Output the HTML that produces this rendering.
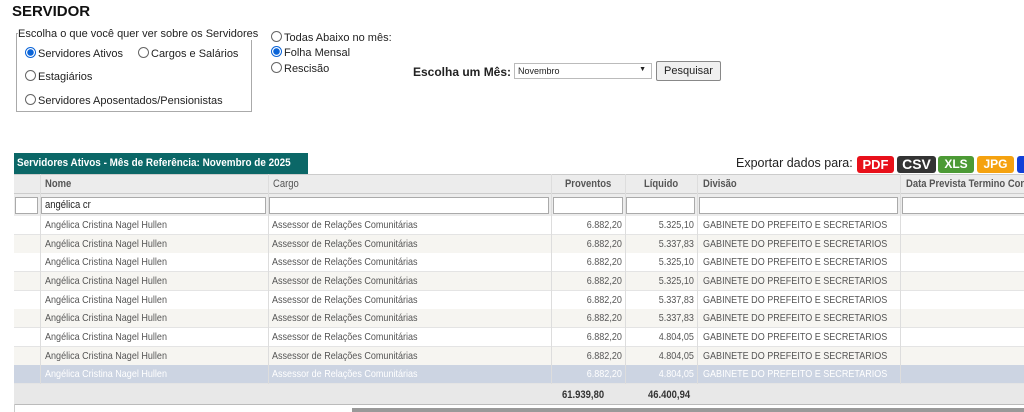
<!DOCTYPE html>
<html><head><meta charset="utf-8"><style>
*{margin:0;padding:0;box-sizing:border-box}
body{width:1024px;height:412px;overflow:hidden;background:#fff;font-family:"Liberation Sans",sans-serif;color:#222;position:relative}
.a{position:absolute;white-space:nowrap}
.r{width:11px;height:11px;border:1px solid #666;border-radius:50%;display:inline-block;vertical-align:-1px;margin-right:2px;background:#fff}
.r.on{border-color:#0a64d8;background:radial-gradient(circle,#0a64d8 0 3px,#fff 3.5px)}
.f{font-size:11px}
.n{display:inline-block;transform:scaleX(.86);transform-origin:left center}
.nr{display:inline-block;transform:scaleX(.86);transform-origin:right center}
.row{position:absolute;left:14px;width:1010px;height:19px;font-size:10.5px;color:#555;border-bottom:1px solid #e4e4e4}
.row div{position:absolute;top:3px;white-space:nowrap}
.vl{position:absolute;top:174px;width:1px;height:210px;background:#ddd}
.inp{position:absolute;top:197px;height:17px;border:1px solid #aaa;background:#fff;font-size:11px;padding-left:3px;line-height:15px}
.btn{position:absolute;top:156px;height:17px;border-radius:3px;color:#fff;font-weight:bold;text-align:center;font-size:12px;line-height:17px}
.h{font-size:11px;color:#555;font-weight:bold}
</style></head><body>
<div class="a" style="left:12px;top:3px;font-size:15px;font-weight:bold;color:#111">SERVIDOR</div>
<div class="a" style="left:16px;top:33px;width:236px;height:79px;border:1px solid #aaa"></div>
<div class="a f" style="left:18px;top:28px;background:#fff">Escolha o que você quer ver sobre os Servidores</div>
<div class="a f" style="left:25px;top:47px"><span class="r on"></span>Servidores Ativos</div>
<div class="a f" style="left:138px;top:47px"><span class="r"></span>Cargos e Salários</div>
<div class="a f" style="left:25px;top:70px"><span class="r"></span>Estagiários</div>
<div class="a f" style="left:25px;top:94px"><span class="r"></span>Servidores Aposentados/Pensionistas</div>
<div class="a f" style="left:271px;top:31px"><span class="r"></span>Todas Abaixo no mês:</div>
<div class="a f" style="left:271px;top:46px"><span class="r on"></span>Folha Mensal</div>
<div class="a f" style="left:271px;top:62px"><span class="r"></span>Rescisão</div>
<div class="a" style="left:413px;top:65px;font-size:12px;font-weight:bold">Escolha um Mês:</div>
<div class="a" style="left:514px;top:63px;width:138px;height:16px;border:1px solid #bbb;font-size:9px;padding:2px 3px">Novembro<span style="position:absolute;right:5px;top:2px;font-size:7px">▼</span></div>
<div class="a" style="left:656px;top:61px;width:65px;height:20px;border:1px solid #888;border-radius:2px;background:#f0f0f0;font-size:11px;text-align:center;line-height:18px">Pesquisar</div>
<div class="a" style="left:14px;top:153px;width:294px;height:21px;background:#0b6767;color:#fff;font-weight:bold;font-size:11px;padding:4px 3px"><span class="n" style="transform:scaleX(.9)">Servidores Ativos - Mês de Referência: Novembro de 2025</span></div>
<div class="a" style="left:736px;top:156px;font-size:12.5px;color:#222">Exportar dados para:</div>
<div class="btn" style="left:857px;width:37px;background:#e8101a;font-size:13px">PDF</div>
<div class="btn" style="left:897px;width:39px;background:#333;font-size:14px">CSV</div>
<div class="btn" style="left:938px;width:36px;background:#4c9a35">XLS</div>
<div class="btn" style="left:977px;width:37px;background:#f5a20f">JPG</div>
<div class="btn" style="left:1017px;width:20px;background:#1140d8"></div>
<div class="a" style="left:14px;top:174px;width:1010px;height:20px;background:#ececec;border-top:1px solid #ccc;border-bottom:1px solid #ccc"></div>
<div class="a" style="left:14px;top:194px;width:1010px;height:22px;background:#ececec"></div>
<div class="a h" style="left:45px;top:178px"><span class="n">Nome</span></div>
<div class="a h" style="left:273px;top:178px;font-weight:normal"><span class="n">Cargo</span></div>
<div class="a h" style="left:565px;top:178px"><span class="n">Proventos</span></div>
<div class="a h" style="left:644px;top:178px"><span class="n">Líquido</span></div>
<div class="a h" style="left:703px;top:178px"><span class="n">Divisão</span></div>
<div class="a h" style="left:906px;top:178px"><span class="n">Data Prevista Termino Con</span></div>
<div class="inp" style="left:15px;width:23px"></div>
<div class="inp" style="left:41px;width:225px"><span class="n">angélica cr</span></div>
<div class="inp" style="left:269px;width:280px"></div>
<div class="inp" style="left:553px;width:70px"></div>
<div class="inp" style="left:626px;width:69px"></div>
<div class="inp" style="left:699px;width:199px"></div>
<div class="inp" style="left:902px;width:130px"></div>
<div id="rows"></div>
<div class="a" style="left:14px;top:384px;width:1010px;height:21px;background:#e8e8e8;border-bottom:1px solid #bbb"></div>
<div class="a" style="left:562px;top:389px;font-size:11px;font-weight:bold;color:#333"><span class="n">61.939,80</span></div>
<div class="a" style="left:648px;top:389px;font-size:11px;font-weight:bold;color:#333"><span class="n">46.400,94</span></div>
<div class="a" style="left:14px;top:404px;width:1px;height:8px;background:#ccc"></div>
<div class="a" style="left:352px;top:408px;width:672px;height:4px;background:#999"></div>
<script>
var l=["5.325,10","5.337,83","5.325,10","5.325,10","5.337,83","5.337,83","4.804,05","4.804,05","4.804,05"],h="";
for(var i=0;i<9;i++){var t=216+i*18.65,sel=i==8,bg=sel?"#ccd4e2":(i%2?"#f6f5f1":"#fff"),c=sel?"#fff":"#555";
h+='<div class="row" style="top:'+t+'px;background:'+bg+';color:'+c+'"><div style="left:31px"><span class="n">Angélica Cristina Nagel Hullen</span></div><div style="left:258px"><span class="n">Assessor de Relações Comunitárias</span></div><div style="right:402px"><span class="nr">6.882,20</span></div><div style="right:330px"><span class="nr">'+l[i]+'</span></div><div style="left:689px"><span class="n">GABINETE DO PREFEITO E SECRETARIOS</span></div></div>';}
[40,268,551,625,697,900].forEach(function(x){h+='<div class="vl" style="left:'+x+'px"></div>'});
document.getElementById("rows").innerHTML=h;
</script>
</body></html>
